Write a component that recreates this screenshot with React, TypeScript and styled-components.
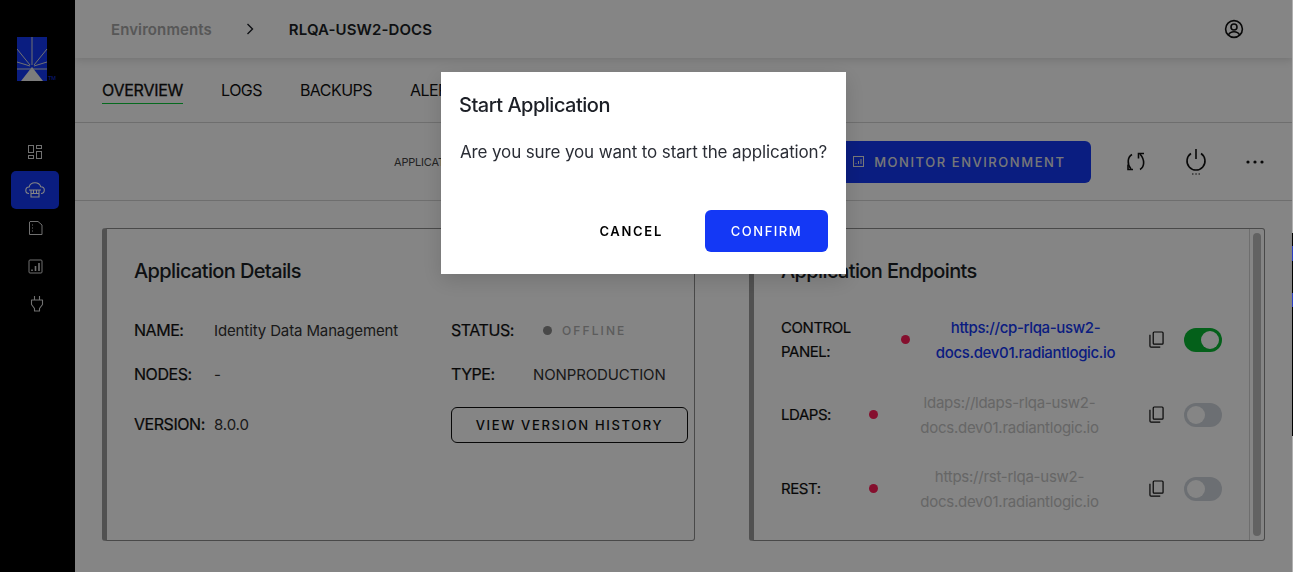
import styled, { createGlobalStyle } from 'styled-components';

const GlobalStyle = createGlobalStyle`
  html, body { margin: 0; padding: 0; height: 100%; overflow: hidden; }
  body { font-family: Inter, "Liberation Sans", sans-serif; background: #fff; color: #1c1f26; }
  * { box-sizing: border-box; }
`;

const Page = styled.div`
  display: flex;
  width: 1293px;
  height: 572px;
  overflow: hidden;
`;

const Sidebar = styled.nav`
  width: 75px;
  flex: none;
  background: #000;
  display: flex;
  flex-direction: column;
  padding: 37px 0 0 11px;
`;

const LogoWrap = styled.div`
  height: 44px;
  margin: 0 0 52px 6px;
`;

const NavItem = styled.div<{ $active?: boolean; $nudge?: number }>`
  width: 48px;
  height: 38px;
  border-radius: 5px;
  display: flex;
  align-items: center;
  justify-content: center;
  padding-left: ${p => p.$nudge ?? 0}px;
  color: ${p => (p.$active ? '#ffffff' : '#d8d8d8')};
  background: ${p => (p.$active ? '#1438f5' : 'transparent')};
`;

const Main = styled.div`
  flex: 1;
  min-width: 0;
  display: flex;
  flex-direction: column;
`;

const Header = styled.header`
  height: 58px;
  flex: none;
  display: flex;
  align-items: center;
  padding: 0 49px 0 36px;
  box-shadow: 0 2px 8px rgba(0, 0, 0, 0.14);
`;

const Crumb = styled.span<{ $current?: boolean }>`
  font-size: 15px;
  font-weight: 600;
  letter-spacing: 0.1px;
  color: ${p => (p.$current ? '#1c1f26' : '#a8a8a8')};
`;

const CrumbArrow = styled.span`
  display: flex;
  margin: 0 35px 0 34px;
  color: #1c1f26;
`;

const HeaderEnd = styled.div`
  margin-left: auto;
  display: flex;
  color: #111;
`;

const Tabs = styled.div`
  height: 65px;
  flex: none;
  display: flex;
  gap: 38px;
  padding: 23px 0 0 27px;
  border-bottom: 1px solid #d4d4d4;
`;

const Tab = styled.div<{ $active?: boolean }>`
  height: 23px;
  font-size: 16px;
  line-height: 19px;
  letter-spacing: ${p => (p.$active ? '-0.25px' : '-0.55px')};
  color: #111;
  border-bottom: 1px solid ${p => (p.$active ? '#0acc3a' : 'transparent')};
  -webkit-text-stroke: ${p => (p.$active ? '0.3px #111' : '0')};
`;

const Toolbar = styled.div`
  height: 78px;
  flex: none;
  display: flex;
  align-items: center;
  padding: 0 29px 0 319px;
  border-bottom: 1px solid #d4d4d4;
`;

const ToolbarLabel = styled.span`
  font-size: 11px;
  letter-spacing: -0.2px;
  color: #444;
  width: 431px;
`;

const MonitorButton = styled.div`
  width: 267px;
  height: 42px;
  flex: none;
  margin-right: 35px;
  padding-left: 29px;
  display: flex;
  align-items: center;
  gap: 10px;
  border-radius: 6px;
  background: #1438f5;
  color: #e6e6e6;
  font-size: 13px;
  font-weight: 500;
  letter-spacing: 1.55px;
`;

const ToolIcon = styled.div<{ $w: number }>`
  width: ${p => p.$w}px;
  display: flex;
  justify-content: center;
  color: #111;
`;

const PowerIcon = styled(ToolIcon)`
  margin-top: 2px;
`;

const Cards = styled.div`
  display: flex;
  gap: 54px;
  padding: 27px 28px 0 27px;
`;

const Card = styled.section<{ $w: number }>`
  position: relative;
  width: ${p => p.$w}px;
  height: 313px;
  flex: none;
  border: 1px solid #8c8c8c;
  border-left: 5px solid #9c9c9c;
  border-radius: 3px;
  padding: 28px 0 0 27px;
  overflow: hidden;
`;

const CardTitle = styled.h2<{ $gap: number }>`
  margin: 0 0 ${p => p.$gap}px;
  font-size: 20px;
  line-height: 28px;
  font-weight: 500;
  letter-spacing: -0.62px;
  color: #1c1f26;
`;

const DetailGrid = styled.div`
  display: grid;
  grid-template-columns: 80px 237px 82px 1fr;
  grid-template-rows: 32px 32px 44px;
  row-gap: 12px;
  align-items: center;
`;

const Label = styled.span`
  font-size: 16px;
  letter-spacing: -0.45px;
  color: #111;
  -webkit-text-stroke: 0.2px #111;
`;

const Value = styled.span`
  font-size: 15px;
  letter-spacing: -0.12px;
  color: #333;
  white-space: nowrap;
`;

const StatusCell = styled.span`
  display: flex;
  align-items: center;
  gap: 10px;
  margin-left: 10px;
  font-size: 12px;
  font-weight: 500;
  letter-spacing: 2.1px;
  color: #b0b0b0;
`;

const StatusDot = styled.i`
  width: 9px;
  height: 9px;
  border-radius: 50%;
  background: #8a8a8a;
`;

const OutlineButton = styled.div`
  grid-column: 3 / 5;
  width: 237px;
  height: 36px;
  margin-top: 2px;
  border: 1px solid #111;
  border-radius: 6px;
  display: flex;
  align-items: center;
  justify-content: center;
  font-size: 13px;
  font-weight: 500;
  letter-spacing: 1.65px;
  color: #111;
`;

const Endpoint = styled.div<{ $h: number }>`
  display: flex;
  align-items: center;
  height: ${p => p.$h}px;
  width: 441px;
`;

const EndpointLabel = styled(Label)<{ $w: number }>`
  width: ${p => p.$w}px;
  font-size: 15px;
  line-height: 24px;
  flex: none;
`;

const HealthDot = styled.i`
  width: 9px;
  height: 9px;
  border-radius: 50%;
  background: #ff1e58;
  flex: none;
`;

const Url = styled.div<{ $on?: boolean }>`
  flex: 1;
  padding-right: 8px;
  text-align: center;
  font-size: 15px;
  line-height: 25px;
  letter-spacing: ${p => (p.$on ? '-0.35px' : '-0.25px')};
  font-weight: ${p => (p.$on ? 500 : 400)};
  color: ${p => (p.$on ? '#1438f5' : '#c4c4c4')};
  span { display: block; }
`;

const CopyIcon = styled.div`
  display: flex;
  width: 35px;
  flex: none;
  color: #111;
`;

const Toggle = styled.div<{ $on?: boolean }>`
  width: 38px;
  height: 24px;
  flex: none;
  border-radius: 12px;
  padding: 3px;
  display: flex;
  justify-content: ${p => (p.$on ? 'flex-end' : 'flex-start')};
  background: ${p => (p.$on ? '#08b832' : '#d0d5dc')};
`;

const Knob = styled.i`
  width: 18px;
  height: 18px;
  border-radius: 50%;
  background: #fff;
`;

const Scrollbar = styled.div`
  position: absolute;
  top: 0;
  right: 0;
  bottom: 0;
  width: 15px;
  padding: 4px 3px 4px;
  border-left: 1px solid #d4d4d4;
`;

const ScrollThumb = styled.div`
  height: 100%;
  border-radius: 4px;
  background: #bdbdbd;
`;

const Backdrop = styled.div`
  position: fixed;
  inset: 0;
  background: rgba(0, 0, 0, 0.48);
`;

const EdgeSliver = styled.div`
  position: fixed;
  top: 0;
  right: 0;
  bottom: 0;
  width: 1px;
  background: linear-gradient(
    to bottom,
    #b0b0b0 0 233px,
    #000 233px 246px,
    #2a3cc0 246px 261px,
    #000 261px 293px,
    #2a3cc0 293px 307px,
    #000 307px 436px,
    #b0b0b0 436px
  );
`;

const Dialog = styled.div`
  position: fixed;
  left: 441px;
  top: 72px;
  width: 405px;
  height: 202px;
  background: #fff;
  padding: 19px 18px 22px;
  display: flex;
  flex-direction: column;
  box-shadow: 0 6px 20px rgba(0, 0, 0, 0.15);
`;

const DialogTitle = styled.h2`
  margin: 0 0 19px;
  font-size: 20px;
  line-height: 28px;
  font-weight: 500;
  letter-spacing: -0.5px;
  color: #1c1f26;
`;

const DialogText = styled.p`
  margin: 0 0 0 1px;
  font-size: 17px;
  line-height: 28px;
  letter-spacing: -0.13px;
  color: #2a2d35;
  white-space: nowrap;
`;

const DialogActions = styled.div`
  margin-top: auto;
  display: flex;
  justify-content: flex-end;
  align-items: center;
  gap: 42px;
`;

const CancelButton = styled.span`
  font-size: 13px;
  font-weight: 600;
  letter-spacing: 1.7px;
  color: #000;
`;

const ConfirmButton = styled.div`
  width: 123px;
  height: 42px;
  border-radius: 6px;
  background: #1438f5;
  color: #fff;
  display: flex;
  align-items: center;
  justify-content: center;
  font-size: 13px;
  font-weight: 500;
  letter-spacing: 1.5px;
`;

const Logo = () => (
  <svg width="42" height="44" viewBox="0 0 42 44">
    <rect x="0" y="0" width="30" height="44" fill="#1438f5" />
    <path d="M15 30L4 44H26Z" fill="#eee" />
    <path d="M15 0V28M0 12L13 28M30 12L17 28M0 25L13 29M30 25L17 29M0 32H30" stroke="#d8d8d8" strokeWidth="1" fill="none" />
    <text x="31" y="43" fontSize="5.500" fill="#1438f5" fontFamily="Liberation Sans">TM</text>
  </svg>
);

const IconDash = () => (
  <svg width="16" height="16" viewBox="0 0 16 16" fill="none" stroke="currentColor" strokeWidth="1">
    <rect x="1.500" y="1.500" width="5" height="7" />
    <rect x="9.500" y="1.500" width="5" height="3" />
    <rect x="1.500" y="11.500" width="5" height="3" />
    <rect x="9.500" y="7.500" width="5" height="7" />
  </svg>
);

const IconCloud = () => (
  <svg width="20" height="16" viewBox="0 0 20 16" fill="none" stroke="currentColor" strokeWidth="1.100">
    <path d="M4 11.500C1.800 11.500 .8 9.800 .8 8.200 .8 6 2.500 4.800 4.200 5 4.800 2.200 7 .8 10 .8c3 0 5 1.500 5.800 4 1.900 0 3.500 1.300 3.500 3.300 0 1.900-1.400 3.400-3.300 3.400" />
    <path d="M4 8H16M6 8V15H14V8M8.500 8V11.500M11.500 8V11.500M6 11.500H14" />
  </svg>
);

const IconFile = () => (
  <svg width="15" height="16" viewBox="0 0 15 16" fill="none" stroke="currentColor" strokeWidth="1">
    <path d="M2 1.500H10L14 5V14.500H1.500V2Z" strokeLinejoin="round" />
    <path d="M4 5H5M4 8H5M4 11H5" />
  </svg>
);

const IconChart = () => (
  <svg width="15" height="15" viewBox="0 0 15 15" fill="none" stroke="currentColor" strokeWidth="1">
    <rect x="1" y="1" width="13" height="13" rx="1" />
    <path d="M4 10.500V12M7.500 7V12M11 4V12" strokeWidth="1.600" />
  </svg>
);

const IconPlug = () => (
  <svg width="14" height="18" viewBox="0 0 14 18" fill="none" stroke="currentColor" strokeWidth="1.100">
    <path d="M4.500 1V5M9.500 1V5M1.500 5H12.500V9.500L9.500 13.500V16H4.500V13.500L1.500 9.500Z" strokeLinejoin="round" />
  </svg>
);

const IconUser = () => (
  <svg width="20" height="20" viewBox="0 0 20 20" fill="none" stroke="currentColor" strokeWidth="1.600">
    <circle cx="10" cy="10" r="8.400" />
    <circle cx="10" cy="8" r="3" />
    <path d="M4.500 16c1-2.400 3-3.200 5.500-3.200s4.500 .8 5.500 3.200" />
  </svg>
);

const IconChevron = () => (
  <svg width="8" height="12" viewBox="0 0 8 12" fill="none" stroke="currentColor" strokeWidth="1.400">
    <path d="M1.500 1L6.500 6 1.500 11" />
  </svg>
);

const IconSync = () => (
  <svg width="20" height="20" viewBox="0 0 20 20" fill="none" stroke="currentColor" strokeWidth="1.600">
    <path d="M6 2.500C1.500 5 .8 12 5 17" />
    <path d="M2 12.500V17.500H7" />
    <path d="M14 17.500C18.500 15 19.200 8 14 2" />
    <path d="M18 1.500H12.500V6.500" />
  </svg>
);

const IconPower = () => (
  <svg width="22" height="30" viewBox="0 0 22 30" fill="none" stroke="currentColor" strokeWidth="1.600">
    <path d="M6 5.500A9 9 0 1 0 16 5.500" />
    <path d="M11 1V11" />
    <path d="M7 26H8.500M10.300 26H11.800M13.500 26H15" strokeWidth="1" />
  </svg>
);

const IconDots = () => (
  <svg width="18" height="4" viewBox="0 0 18 4" fill="currentColor">
    <circle cx="2" cy="2" r="1.600" />
    <circle cx="9" cy="2" r="1.600" />
    <circle cx="16" cy="2" r="1.600" />
  </svg>
);

const IconCopy = () => (
  <svg width="15" height="17" viewBox="0 0 16 18" fill="none" stroke="currentColor" strokeWidth="1.300">
    <rect x="4.500" y="1" width="10.500" height="13" rx="1" />
    <path d="M1 4V16C1 16.800 1.500 17.200 2.200 17.200H12" />
  </svg>
);

const IconMonitor = () => (
  <svg width="11" height="11" viewBox="0 0 11 11" fill="none" stroke="currentColor" strokeWidth="1">
    <rect x=".5" y=".5" width="10" height="10" />
    <path d="M3 8V7M5.500 8V5M8 8V3" />
  </svg>
);

const endpoints = [
  { label: <>CONTROL<br />PANEL:</>, w: 120, h: 75, on: true, url: ['https://cp-rlqa-usw2-', 'docs.dev01.radiantlogic.io'] },
  { label: 'LDAPS:', w: 88, h: 75, on: false, url: ['ldaps://ldaps-rlqa-usw2-', 'docs.dev01.radiantlogic.io'] },
  { label: 'REST:', w: 88, h: 73, on: false, url: ['https://rst-rlqa-usw2-', 'docs.dev01.radiantlogic.io'] },
];

const App = () => (
  <>
    <GlobalStyle />
    <Page>
      <Sidebar>
        <LogoWrap><Logo /></LogoWrap>
        <NavItem><IconDash /></NavItem>
        <NavItem $active><IconCloud /></NavItem>
        <NavItem><IconFile /></NavItem>
        <NavItem><IconChart /></NavItem>
        <NavItem $nudge={4}><IconPlug /></NavItem>
      </Sidebar>
      <Main>
        <Header>
          <Crumb>Environments</Crumb>
          <CrumbArrow><IconChevron /></CrumbArrow>
          <Crumb $current>RLQA-USW2-DOCS</Crumb>
          <HeaderEnd><IconUser /></HeaderEnd>
        </Header>
        <Tabs>
          <Tab $active>OVERVIEW</Tab>
          <Tab>LOGS</Tab>
          <Tab>BACKUPS</Tab>
          <Tab>ALERTS</Tab>
        </Tabs>
        <Toolbar>
          <ToolbarLabel>APPLICATION</ToolbarLabel>
          <MonitorButton><IconMonitor />MONITOR ENVIRONMENT</MonitorButton>
          <ToolIcon $w={20}><IconSync /></ToolIcon>
          <PowerIcon $w={100}><IconPower /></PowerIcon>
          <ToolIcon $w={18}><IconDots /></ToolIcon>
        </Toolbar>
        <Cards>
          <Card $w={593}>
            <CardTitle $gap={29}>Application Details</CardTitle>
            <DetailGrid>
              <Label>NAME:</Label>
              <Value>Identity Data Management</Value>
              <Label>STATUS:</Label>
              <StatusCell><StatusDot />OFFLINE</StatusCell>
              <Label>NODES:</Label>
              <Value>-</Value>
              <Label>TYPE:</Label>
              <Value>NONPRODUCTION</Value>
              <Label>VERSION:</Label>
              <Value>8.0.0</Value>
              <OutlineButton>VIEW VERSION HISTORY</OutlineButton>
            </DetailGrid>
          </Card>
          <Card $w={516}>
            <CardTitle $gap={17}>Application Endpoints</CardTitle>
            {endpoints.map(e => (
              <Endpoint key={e.url[0]} $h={e.h}>
                <EndpointLabel $w={e.w}>{e.label}</EndpointLabel>
                <HealthDot />
                <Url $on={e.on}><span>{e.url[0]}</span><span>{e.url[1]}</span></Url>
                <CopyIcon><IconCopy /></CopyIcon>
                <Toggle $on={e.on}><Knob /></Toggle>
              </Endpoint>
            ))}
            <Scrollbar><ScrollThumb /></Scrollbar>
          </Card>
        </Cards>
      </Main>
    </Page>
    <Backdrop />
    <EdgeSliver />
    <Dialog>
      <DialogTitle>Start Application</DialogTitle>
      <DialogText>Are you sure you want to start the application?</DialogText>
      <DialogActions>
        <CancelButton>CANCEL</CancelButton>
        <ConfirmButton>CONFIRM</ConfirmButton>
      </DialogActions>
    </Dialog>
  </>
);

export default App;
